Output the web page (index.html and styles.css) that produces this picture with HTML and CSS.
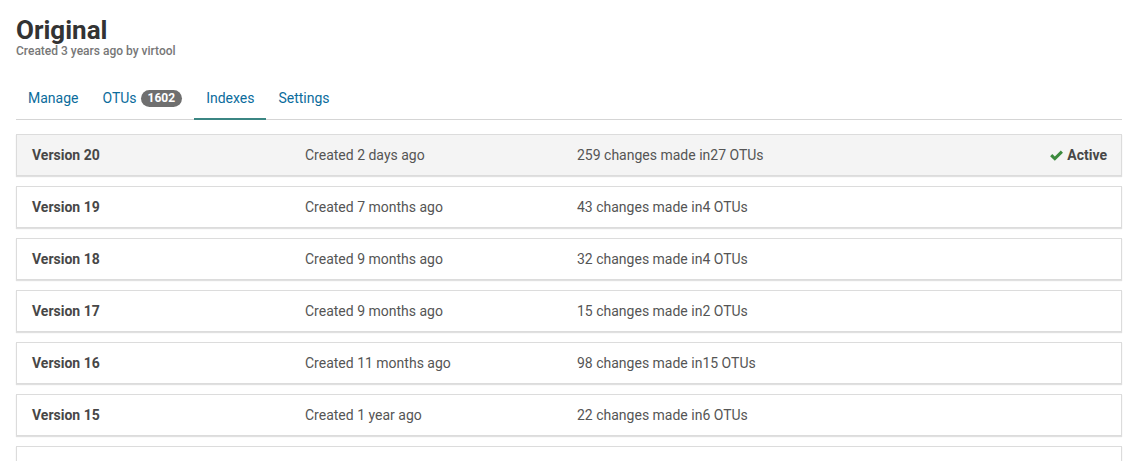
FILE: index.html
```html
<!DOCTYPE html>
<html>
<head>
<meta charset="utf-8">
<link rel="stylesheet" href="styles.css">
</head>
<body>
<div class="page">
  <header class="head">
    <h1 class="title">Original</h1>
    <div class="subtitle">Created 3 years ago by virtool</div>
  </header>
  <nav class="tabs">
    <a class="tab">Manage</a>
    <a class="tab">OTUs <span class="badge">1602</span></a>
    <a class="tab active">Indexes</a>
    <a class="tab">Settings</a>
  </nav>
  <div class="list">
    <div class="row current">
      <div class="ver">Version 20</div>
      <div class="cell">Created 2 days ago</div>
      <div class="cell">259 changes made in27 OTUs</div>
      <div class="status"><svg class="check" viewBox="0 0 16 16" width="15" height="15"><path d="M1.2 8.7 L3.5 6.4 L6.2 9.1 L12.6 2.7 L14.9 5 L6.2 13.6 Z" fill="#3c8a3e"/></svg>Active</div>
    </div>
    <div class="row">
      <div class="ver">Version 19</div>
      <div class="cell">Created 7 months ago</div>
      <div class="cell">43 changes made in4 OTUs</div>
      <div class="status"></div>
    </div>
    <div class="row">
      <div class="ver">Version 18</div>
      <div class="cell">Created 9 months ago</div>
      <div class="cell">32 changes made in4 OTUs</div>
      <div class="status"></div>
    </div>
    <div class="row">
      <div class="ver">Version 17</div>
      <div class="cell">Created 9 months ago</div>
      <div class="cell">15 changes made in2 OTUs</div>
      <div class="status"></div>
    </div>
    <div class="row">
      <div class="ver">Version 16</div>
      <div class="cell">Created 11 months ago</div>
      <div class="cell">98 changes made in15 OTUs</div>
      <div class="status"></div>
    </div>
    <div class="row">
      <div class="ver">Version 15</div>
      <div class="cell">Created 1 year ago</div>
      <div class="cell">22 changes made in6 OTUs</div>
      <div class="status"></div>
    </div>
    <div class="row stub"></div>
  </div>
</div>
</body>
</html>
```
FILE: styles.css
```css
html, body {
  margin: 0;
  padding: 0;
  background: #fff;
}
body {
  font-family: Roboto, "Liberation Sans", sans-serif;
  font-size: 14px;
  color: #555;
  overflow: hidden;
}
.page {
  padding: 0 10px 0 16px;
}
.head {
  padding-top: 15px;
}
.title {
  margin: 0;
  font-size: 26px;
  line-height: 30px;
  font-weight: 700;
  color: #333;
}
.subtitle {
  font-size: 12px;
  line-height: 14px;
  font-weight: 500;
  color: #777;
  margin-top: -1px;
}
.tabs {
  display: flex;
  margin-top: 20px;
  border-bottom: 1px solid #d5d5d5;
}
.tab {
  padding: 10px 12px;
  line-height: 20px;
  color: #0b6c9c;
  display: flex;
  align-items: center;
  gap: 4px;
  border-bottom: 2px solid transparent;
  margin-bottom: -1px;
}
.tab.active {
  border-bottom: 2px solid #3b8683;
}
.badge {
  background: #6f6f6f;
  color: #fff;
  font-size: 12px;
  font-weight: 700;
  line-height: 17px;
  padding: 0 7px;
  border-radius: 9px;
}
.list {
  margin-top: 14px;
}
.row {
  display: grid;
  grid-template-columns: 273px 272px 1fr auto;
  align-items: center;
  border: 1px solid #dcdcdc;
  box-shadow: 0 1px 1px rgba(0, 0, 0, 0.12);
  padding: 10px 14px 10px 15px;
  line-height: 20px;
  margin-bottom: 10px;
  background: #fff;
}
.row.stub {
  height: 20px;
}
.row.current {
  background: #f4f4f4;
}
.ver {
  font-weight: 700;
  color: #474747;
}
.cell {
  color: #555;
}
.status {
  font-weight: 700;
  color: #474747;
  display: flex;
  align-items: center;
  gap: 3px;
}
.check {
  display: block;
}
```
